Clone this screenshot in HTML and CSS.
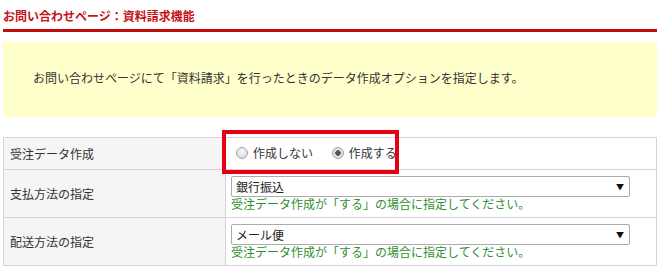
FILE: index.html
```html
<!DOCTYPE html>
<html>
<head>
  <meta charset="UTF-8">
  <meta name="viewport" content="width=device-width, initial-scale=1.0">
  <title>資料請求機能</title>
  <link rel="stylesheet" href="styles.css">
</head>
<body>
  <div class="page">
    <h1 class="page-title">お問い合わせページ：資料請求機能</h1>

    <div class="notice">お問い合わせページにて「資料請求」を行ったときのデータ作成オプションを指定します。</div>

    <table class="settings">
      <tr class="row-radio">
        <th>受注データ作成</th>
        <td>
          <label class="radio"><input type="radio" name="order_data" value="0">作成しない</label>
          <label class="radio"><input type="radio" name="order_data" value="1" checked>作成する</label>
        </td>
      </tr>
      <tr>
        <th>支払方法の指定</th>
        <td>
          <div class="select-wrap">
            <select class="select">
              <option>銀行振込</option>
              <option>クレジットカード</option>
              <option>代金引換</option>
            </select>
            <span class="select-arrow">▼</span>
          </div>
          <div class="help">受注データ作成が「する」の場合に指定してください。</div>
        </td>
      </tr>
      <tr>
        <th>配送方法の指定</th>
        <td>
          <div class="select-wrap">
            <select class="select">
              <option>メール便</option>
              <option>宅配便</option>
            </select>
            <span class="select-arrow">▼</span>
          </div>
          <div class="help">受注データ作成が「する」の場合に指定してください。</div>
        </td>
      </tr>
    </table>

    <div class="highlight"></div>
  </div>
</body>
</html>
```

FILE: styles.css
```css
body {
  margin: 0;
  font-family: "Noto Sans CJK JP", "Noto Sans", sans-serif;
  font-size: 12px;
  color: #333;
  background: #fff;
}

.page {
  position: relative;
  margin-left: 3px;
  width: 654px;
}

.page-title {
  margin: 0;
  padding-top: 8px;
  padding-bottom: 5px;
  font-size: 12px;
  line-height: 16px;
  font-weight: bold;
  color: #c4121a;
  border-bottom: 3px solid #c20c0c;
}

.notice {
  margin-top: 10px;
  padding: 27px 0 30px 30px;
  line-height: 18px;
  background: #ffffcc;
}

.settings {
  margin-top: 20px;
  width: 100%;
  border-collapse: collapse;
}

.settings th,
.settings td {
  border: 1px solid #d4d4d4;
  padding: 6px 5px;
  vertical-align: middle;
}

.settings th {
  width: 210px;
  padding-left: 6px;
  text-align: left;
  font-weight: normal;
  background: #f5f5f5;
}

.settings td {
  background: #fff;
}

.row-radio td,
.row-radio th {
  line-height: 18px;
}

.radio {
  display: inline-flex;
  align-items: center;
  margin-left: 5px;
  margin-right: 11px;
}

.radio input {
  appearance: none;
  box-sizing: border-box;
  width: 12px;
  height: 12px;
  margin: 0 5px 0 0;
  border: 1px solid #a6a6a6;
  border-radius: 50%;
  background: radial-gradient(circle at 50% 35%, #f7f7f7, #d3d3d3);
}

.radio input:checked {
  background: radial-gradient(circle, #555 0, #555 2.5px, #e8e8e8 3px, #d0d0d0 100%);
}

.select-wrap {
  position: relative;
  width: 399px;
}

.select {
  appearance: none;
  display: block;
  width: 100%;
  height: 21px;
  margin: 0;
  padding: 0 0 0 4px;
  border: 1px solid #ababab;
  border-radius: 2px;
  background: #fff;
  font-family: inherit;
  font-size: 12px;
  color: #222;
}

.select-arrow {
  position: absolute;
  right: 6px;
  top: 6px;
  font-size: 8px;
  line-height: 9px;
  color: #111;
  pointer-events: none;
}

.help {
  line-height: 14px;
  color: #2f8f2f;
}

.highlight {
  position: absolute;
  left: 219px;
  top: 130px;
  width: 169px;
  height: 36px;
  border: 4px solid #e60012;
  pointer-events: none;
}
```
